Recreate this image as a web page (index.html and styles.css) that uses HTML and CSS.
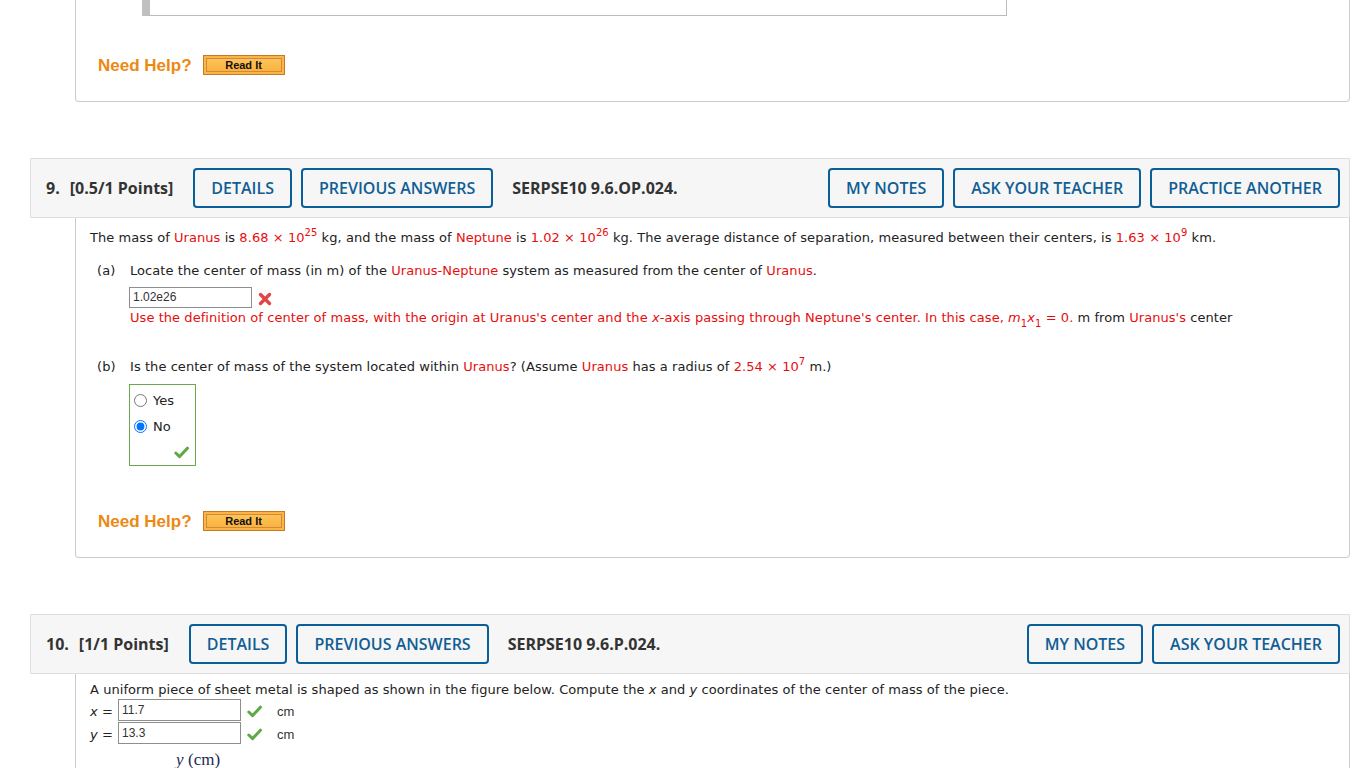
FILE: index.html
```html
<!DOCTYPE html>
<html lang="en">
<head>
<meta charset="utf-8">
<title>Questions</title>
<link rel="stylesheet" href="styles.css">
</head>
<body>
<div class="page">

  <div class="qbody prev">
    <div class="figbox"></div>
    <div class="help">
      <span class="need">Need Help?</span>
      <span class="readit"><span class="readit-in">Read It</span></span>
    </div>
  </div>

  <div class="qhead">
    <span class="qnum">9.</span>
    <span class="pts">[0.5/1 Points]</span>
    <span class="btn">DETAILS</span>
    <span class="btn">PREVIOUS ANSWERS</span>
    <span class="code">SERPSE10 9.6.OP.024.</span>
    <span class="spacer"></span>
    <span class="btn">MY NOTES</span>
    <span class="btn">ASK YOUR TEACHER</span>
    <span class="btn last">PRACTICE ANOTHER</span>
  </div>
  <div class="qbody q9">
    <p class="intro">The mass of <span class="r">Uranus</span> is <span class="r">8.68 &times; 10<sup>25</sup></span> kg, and the mass of <span class="r">Neptune</span> is <span class="r">1.02 &times; 10<sup>26</sup></span> kg. The average distance of separation, measured between their centers, is <span class="r">1.63 &times; 10<sup>9</sup></span> km.</p>

    <div class="part parta">
      <span class="plabel">(a)</span>
      <div class="pbody">
        <div class="ptext">Locate the center of mass (in m) of the <span class="r">Uranus-Neptune</span> system as measured from the center of <span class="r">Uranus</span>.</div>
        <div class="ansrow">
          <span class="field">1.02e26</span>
          <svg class="xmark" width="14" height="14" viewBox="0 0 14 14"><path d="M2.5 2.5 L11.5 11.5 M11.5 2.5 L2.5 11.5" stroke="#e24545" stroke-width="3.4" stroke-linecap="round" fill="none"/></svg>
        </div>
        <div class="feedback"><span class="r">Use the definition of center of mass, with the origin at Uranus's center and the <i>x</i>-axis passing through Neptune's center. In this case, <i>m</i><sub>1</sub><i>x</i><sub>1</sub> = 0.</span> m from <span class="r">Uranus's</span> center</div>
      </div>
    </div>

    <div class="part partb">
      <span class="plabel">(b)</span>
      <div class="pbody">
        <div class="ptext">Is the center of mass of the system located within <span class="r">Uranus</span>? (Assume <span class="r">Uranus</span> has a radius of <span class="r">2.54 &times; 10<sup>7</sup></span> m.)</div>
        <div class="radiobox">
          <label class="ropt"><input type="radio" name="b"><span>Yes</span></label>
          <label class="ropt"><input type="radio" name="b" checked><span>No</span></label>
          <div class="rcheck">
            <svg width="15" height="13" viewBox="0 0 15 13"><path d="M1.8 7 L5.6 10.6 L13.4 2.2" stroke="#5ea845" stroke-width="3" stroke-linecap="round" stroke-linejoin="round" fill="none"/></svg>
          </div>
        </div>
      </div>
    </div>

    <div class="help">
      <span class="need">Need Help?</span>
      <span class="readit"><span class="readit-in">Read It</span></span>
    </div>
  </div>

  <div class="qhead">
    <span class="qnum">10.</span>
    <span class="pts">[1/1 Points]</span>
    <span class="btn">DETAILS</span>
    <span class="btn">PREVIOUS ANSWERS</span>
    <span class="code">SERPSE10 9.6.P.024.</span>
    <span class="spacer"></span>
    <span class="btn">MY NOTES</span>
    <span class="btn last">ASK YOUR TEACHER</span>
  </div>
  <div class="qbody q10">
    <p class="intro">A uniform piece of sheet metal is shaped as shown in the figure below. Compute the <i>x</i> and <i>y</i> coordinates of the center of mass of the piece.</p>
    <div class="coord">
      <span class="clabel"><i>x</i> =</span>
      <span class="field">11.7</span>
      <svg class="cmark" width="15" height="13" viewBox="0 0 15 13"><path d="M1.8 7 L5.6 10.6 L13.4 2.2" stroke="#5ea845" stroke-width="3" stroke-linecap="round" stroke-linejoin="round" fill="none"/></svg>
      <span class="unit">cm</span>
    </div>
    <div class="coord">
      <span class="clabel"><i>y</i> =</span>
      <span class="field">13.3</span>
      <svg class="cmark" width="15" height="13" viewBox="0 0 15 13"><path d="M1.8 7 L5.6 10.6 L13.4 2.2" stroke="#5ea845" stroke-width="3" stroke-linecap="round" stroke-linejoin="round" fill="none"/></svg>
      <span class="unit">cm</span>
    </div>
    <div class="figlabel"><i>y</i> (cm)</div>
  </div>

</div>
</body>
</html>
```
FILE: styles.css
```css
html, body {
  margin: 0;
  padding: 0;
  background: #fff;
}
body {
  font-family: "DejaVu Sans", Verdana, sans-serif;
  font-size: 13px;
  letter-spacing: 0.06px;
  color: #222;
  overflow: hidden;
}
.page {
  margin-left: 30px;
  width: 1320px;
}

/* question body */
.qbody {
  margin-left: 45px;
  border: 1px solid #cbcbcb;
  border-top: none;
  border-radius: 0 0 4px 4px;
  padding-left: 14px;
}
.prev {
  padding-bottom: 26px;
}
.figbox {
  margin-left: 52px;
  width: 865px;
  height: 16px;
  box-sizing: border-box;
  border-left: 8px solid #c0c0c0;
  border-right: 1px solid #bcbcbc;
  border-bottom: 1px solid #bcbcbc;
}

/* need help */
.help {
  display: flex;
  align-items: center;
  height: 20px;
  padding-left: 8px;
  letter-spacing: 0;
}
.prev .help {
  margin-top: 39px;
}
.need {
  font-family: "Liberation Sans", Arial, sans-serif;
  font-weight: bold;
  font-size: 17px;
  line-height: 20px;
  padding-top: 1px;
  color: #ec8913;
  margin-right: 11px;
}
.readit {
  display: inline-block;
  width: 82px;
  height: 20px;
  box-sizing: border-box;
  border: 1px solid #c47a26;
  background: #fcb544;
  padding: 2px;
}
.readit-in {
  display: block;
  height: 14px;
  box-sizing: border-box;
  border: 1px solid #cf8a3c;
  background: linear-gradient(#fdc35a, #fbb23e);
  font-family: "Liberation Sans", Arial, sans-serif;
  font-weight: bold;
  font-size: 11px;
  line-height: 13px;
  text-align: center;
  color: #111;
}

/* header */
.qhead {
  display: flex;
  align-items: center;
  height: 60px;
  box-sizing: border-box;
  margin-top: 56px;
  border: 1px solid #dedede;
  background: #f6f6f6;
  padding: 0 9px 0 15px;
  font-family: "Open Sans", "Noto Sans", sans-serif;
  font-size: 16px;
  letter-spacing: 0;
}
.qnum, .pts, .code {
  font-weight: 700;
  color: #333;
}
.qnum {
  margin-right: 10px;
}
.pts {
  margin-right: 20px;
}
.btn {
  display: inline-flex;
  align-items: center;
  height: 40px;
  box-sizing: border-box;
  border: 2px solid #0b5f98;
  border-radius: 4px;
  padding: 0 16px;
  margin-right: 9px;
  color: #115e94;
  font-weight: 600;
}
.btn.last {
  margin-right: 0;
}
.code {
  margin-left: 10px;
}
.spacer {
  flex: 1;
}

/* q9 content */
.r {
  color: #e80d0d;
}
sup {
  font-size: 10px;
  line-height: 0;
  vertical-align: 6px;
}
sub {
  font-size: 10px;
  line-height: 0;
  vertical-align: -5px;
}
.q9 {
  padding-top: 10px;
  padding-bottom: 26px;
}
.intro {
  margin: 0;
  line-height: 18px;
  padding-top: 1px;
}
.part {
  display: flex;
  line-height: 18px;
}
.parta {
  margin-top: 14px;
}
.partb {
  margin-top: 30px;
}
.plabel {
  width: 33px;
  padding-left: 7px;
  padding-top: 1px;
  flex: none;
}
.ptext {
  padding-top: 1px;
}
.ansrow {
  display: flex;
  align-items: center;
  margin-top: 7px;
  margin-left: -1px;
  height: 21px;
}
.field {
  display: inline-block;
  width: 123px;
  height: 21px;
  box-sizing: border-box;
  border: 1px solid #8e8e8e;
  padding-left: 3px;
  font-family: "Liberation Sans", Arial, sans-serif;
  font-size: 12px;
  line-height: 19px;
  letter-spacing: 0;
  color: #333;
}
.xmark {
  margin-left: 6px;
  margin-top: 2px;
}
.feedback {
  line-height: 18px;
  padding-top: 1px;
}
.radiobox {
  margin-top: 8px;
  margin-left: -1px;
  width: 67px;
  height: 82px;
  box-sizing: border-box;
  border: 1px solid #6aa84f;
  padding-top: 2px;
}
.ropt {
  display: flex;
  align-items: center;
  height: 26px;
}
.ropt span {
  padding-top: 2px;
}
.ropt input {
  width: 13px;
  height: 13px;
  margin: 0 6px 0 4px;
}
.rcheck {
  height: 26px;
  display: flex;
  justify-content: flex-end;
  align-items: center;
  padding-right: 6px;
}
.q9 .help {
  margin-top: 45px;
}

/* q10 */
.q10 {
  padding-top: 6px;
  height: 300px;
}
.q10 .intro {
  margin-bottom: 0;
}
.coord {
  display: flex;
  align-items: center;
  height: 22px;
  margin-bottom: 1px;
}
.coord .field {
  height: 22px;
  line-height: 20px;
}
.clabel {
  width: 28px;
  padding-top: 2px;
}
.cmark {
  margin-left: 6px;
  margin-top: 3px;
}
.unit {
  margin-left: 15px;
  padding-top: 2px;
  font-family: "Liberation Sans", Arial, sans-serif;
  font-size: 13px;
  color: #333;
}
.figlabel {
  margin-top: 6px;
  margin-left: 86px;
  font-family: "Liberation Serif", "Times New Roman", serif;
  font-size: 17px;
  line-height: 20px;
  color: #1c2a55;
}
```
